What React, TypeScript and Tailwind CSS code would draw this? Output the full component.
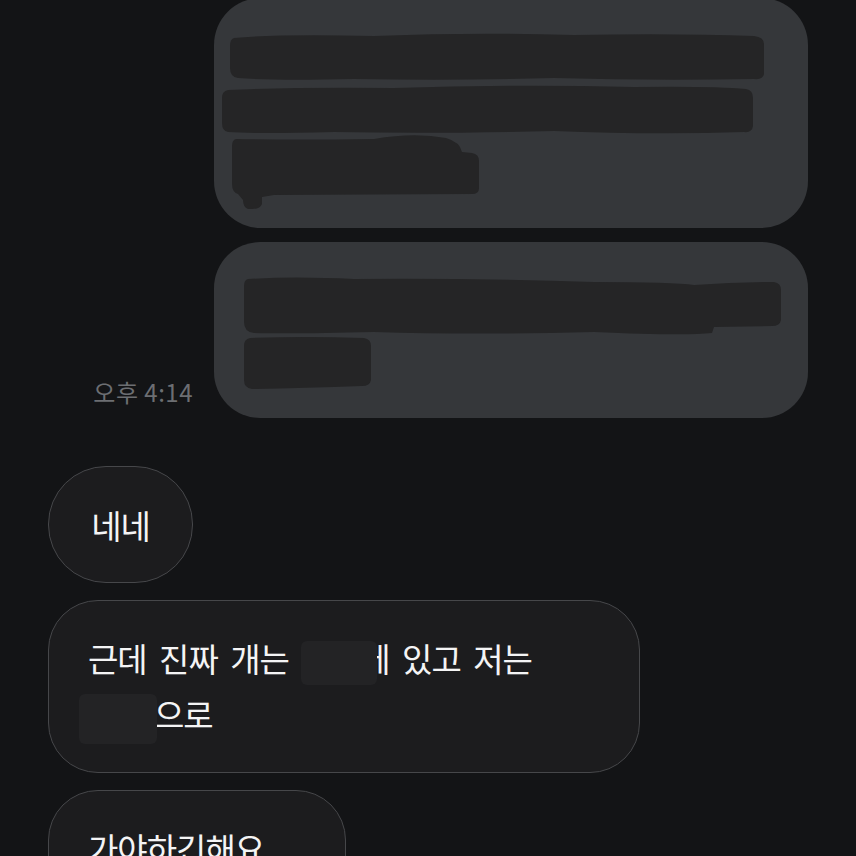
const font = { fontFamily: '"Noto Sans CJK KR", "Noto Sans", sans-serif' };

function SentBubbleTop() {
  return (
    <div className="relative -mt-[2px] h-[230px] w-[594px] shrink-0 self-end rounded-[47px] bg-[#35373a]">
      {/* redaction scribbles */}
      <svg className="absolute inset-0" width="594" height="230" viewBox="0 0 594 230">
        <g fill="#252526">
          <path d="M20 40 Q60 36 160 38 Q260 34 360 37 Q460 35 540 38 Q550 39 550 46 L550 76 Q549 82 540 81 Q440 83 340 80 Q240 83 140 81 Q60 83 24 80 Q16 79 16 70 L16 48 Q16 41 20 40 Z" />
          <path d="M14 92 Q80 89 180 90 Q300 86 420 89 Q500 88 532 91 Q539 92 539 100 L539 128 Q538 135 530 134 Q440 137 340 133 Q220 136 120 134 Q40 136 14 134 Q8 133 8 125 L8 100 Q8 93 14 92 Z" />
          <path d="M22 141 Q80 142 160 141 Q200 134 232 140 Q246 144 248 154 L258 155 Q265 156 265 163 L265 190 Q265 196 258 196 L60 197 L48 199 L48 206 Q46 211 38 211 L34 211 Q29 209 29 202 L24 196 Q18 194 18 186 L18 148 Q18 142 22 141 Z" />
        </g>
      </svg>
    </div>
  );
}

function SentBubbleBottom() {
  return (
    <div className="relative h-[176px] w-[594px] shrink-0 rounded-[46px] bg-[#35373a]">
      <svg className="absolute inset-0" width="594" height="176" viewBox="0 0 594 176">
        <g fill="#252526">
          <path d="M34 37 Q80 34 140 37 Q260 36 380 40 Q460 40 480 43 Q520 40 560 40 Q567 41 567 48 L567 78 Q566 84 558 84 L500 85 L498 91 Q470 94 380 90 Q260 93 160 90 Q80 92 40 91 Q30 90 30 80 L30 44 Q30 38 34 37 Z" />
          <path d="M36 96 Q90 94 150 96 Q157 97 157 104 L157 138 Q156 144 148 144 Q90 146 38 147 Q30 146 30 138 L30 104 Q30 97 36 96 Z" />
        </g>
      </svg>
    </div>
  );
}

function Received({ children, className }: { children: React.ReactNode; className?: string }) {
  return (
    <div
      className={
        "shrink-0 self-start rounded-[50px] border-[1.5px] border-[#46474a] bg-[#1c1c1e] text-[33px] leading-[56px] tracking-[-1px] [word-spacing:6px] text-[#f4f4f5] " +
        (className ?? "")
      }
      style={font}
    >
      {children}
    </div>
  );
}

export default function App() {
  return (
    <div className="flex h-[856px] w-[856px] flex-col overflow-hidden bg-[#131416] px-[48px]" style={font}>
      <SentBubbleTop />

      <div className="mt-[14px] flex shrink-0 items-end justify-end gap-[21px]">
        <span className="mb-[14px] text-[24px] leading-none tracking-[0.5px] text-[#6c6e72]">오후 4:14</span>
        <SentBubbleBottom />
      </div>

      <Received className="mt-[48px] flex h-[117px] w-[145px] items-center justify-center rounded-[58px]">
        네네
      </Received>

      <Received className="mt-[17px] h-[173px] w-[592px] px-[39px] py-[29px]">
        <p>
          근데 진짜 개는{" "}
          <span className="relative z-10 -mr-[17px] inline-block h-[44px] w-[76px] rounded-[6px] bg-[#232325] align-middle" />
          에 있고 저는
          <br />
          <span className="relative z-10 -ml-[9px] -mr-[3px] inline-block h-[50px] w-[78px] rounded-[6px] bg-[#232325] align-middle" />
          으로
        </p>
      </Received>

      <Received className="mt-[17px] h-[120px] w-[298px] px-[39px] py-[29px]">
        가야하긴해요
      </Received>
    </div>
  );
}
